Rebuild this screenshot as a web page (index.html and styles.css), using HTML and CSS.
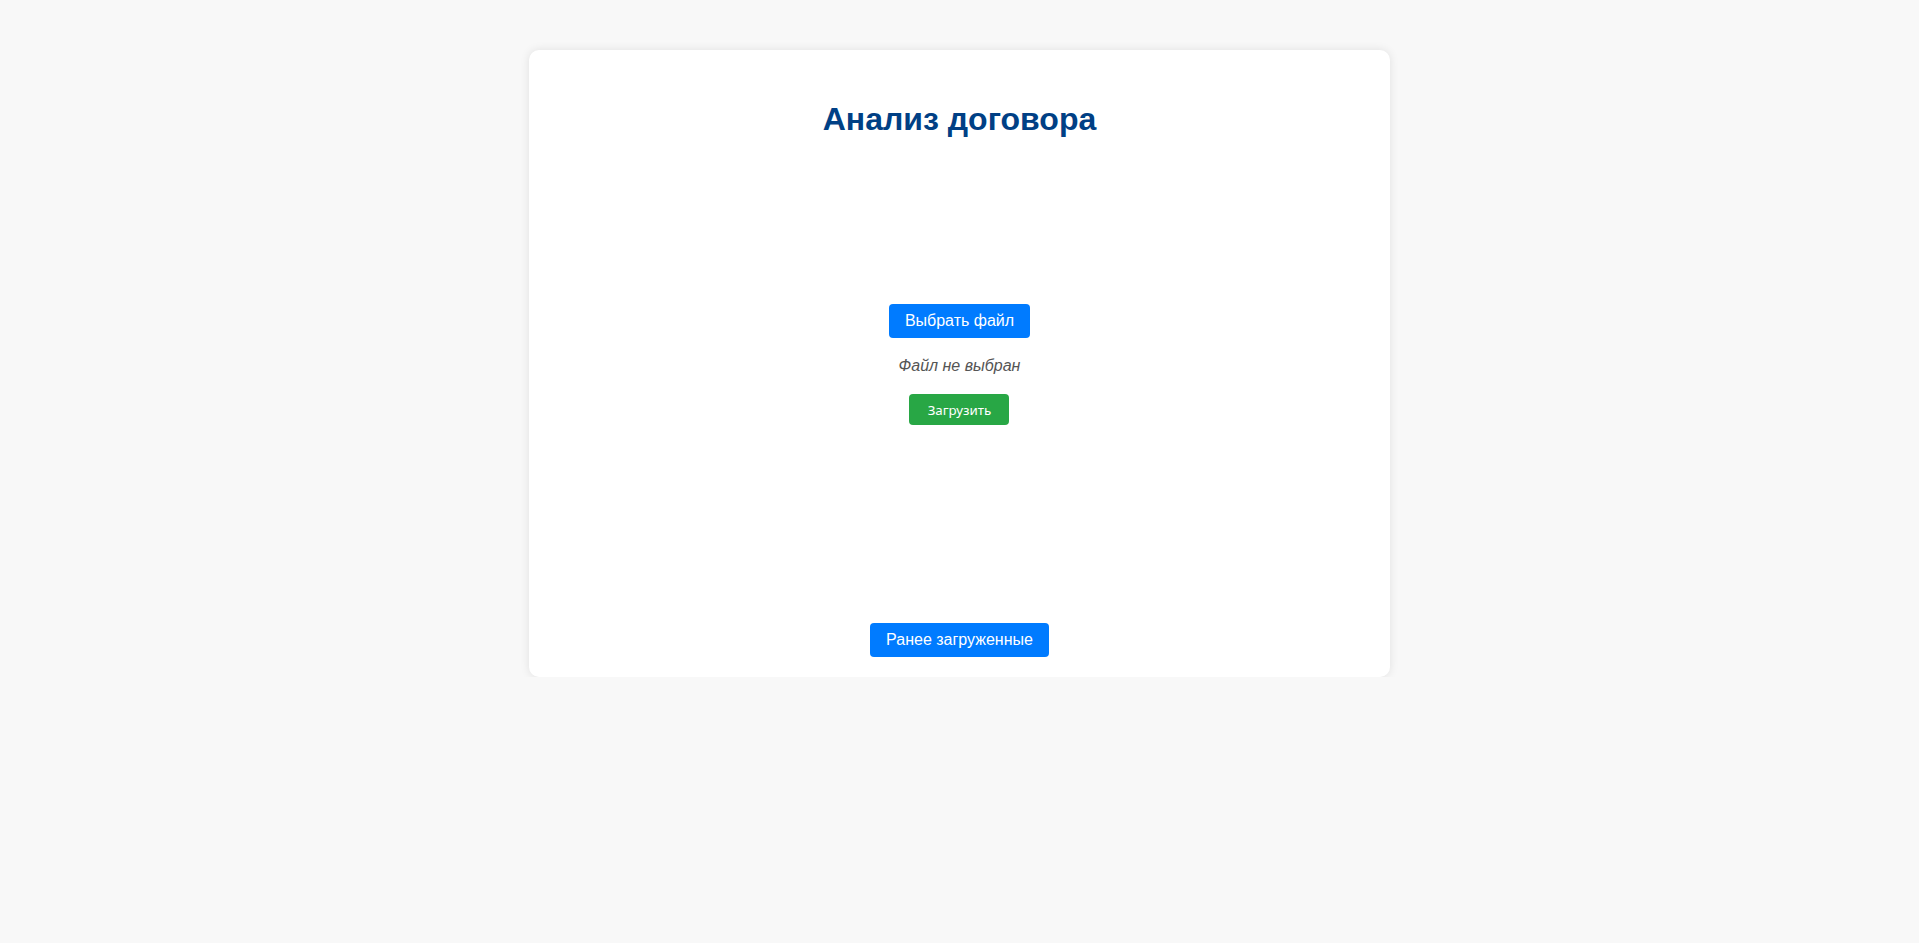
FILE: index.html
```html
<!DOCTYPE html>
<html lang="ru">
<head>
<meta charset="utf-8">
<title>Анализ договора</title>
<link rel="stylesheet" href="styles.css">
</head>
<body>
<div class="card">
  <h1 class="title">Анализ договора</h1>
  <div class="upload">
    <button class="btn btn-blue">Выбрать файл</button>
    <p class="file-name">Файл не выбран</p>
    <button class="btn-green">Загрузить</button>
  </div>
  <div class="footer">
    <button class="btn btn-blue">Ранее загруженные</button>
  </div>
</div>
</body>
</html>
```
FILE: styles.css
```css
html, body {
  margin: 0;
  padding: 0;
}
body {
  background: #f8f8f8;
  font-family: "Liberation Sans", Arial, sans-serif;
  padding-top: 50px;
}
.card {
  box-sizing: border-box;
  width: 861px;
  height: 627px;
  margin: 0 auto;
  background: #fff;
  border-radius: 10px;
  box-shadow: 0 0 10px rgba(0, 0, 0, 0.1);
  padding: 20px 30px;
  display: flex;
  flex-direction: column;
  align-items: center;
}
.title {
  margin: 31px 0 0;
  font-size: 32px;
  font-weight: bold;
  color: #004085;
  text-align: center;
}
.upload {
  flex: 1;
  display: flex;
  flex-direction: column;
  align-items: center;
  justify-content: flex-start;
  padding-top: 166px;
}
.btn {
  font-family: "Liberation Sans", Arial, sans-serif;
  font-size: 16px;
  color: #fff;
  background: #007bff;
  border: none;
  border-radius: 4px;
  height: 34px;
  padding: 0 16px;
  cursor: pointer;
}
.file-name {
  margin: 19px 0;
  line-height: 18px;
  font-style: italic;
  color: #555;
  font-size: 16px;
}
.btn-green {
  font-family: "Noto Sans", "Open Sans", sans-serif;
  font-size: 13.33px;
  color: #fff;
  background: #28a745;
  border: none;
  border-radius: 4px;
  width: 100px;
  height: 31px;
  cursor: pointer;
}
.footer {
  display: flex;
  justify-content: center;
}
```
